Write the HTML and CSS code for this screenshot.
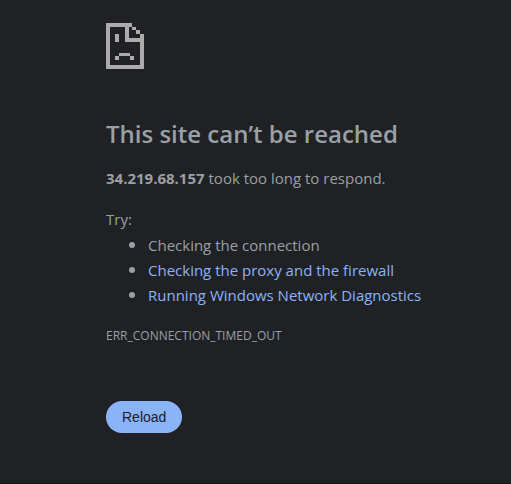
FILE: index.html
```html
<!DOCTYPE html>
<html lang="en">
<head>
<meta charset="utf-8">
<title>34.219.68.157</title>
<link rel="stylesheet" href="styles.css">
</head>
<body>
<main class="error-page">
  <svg class="error-icon" viewBox="0 0 38 46" aria-hidden="true">
    <path d="M0 0h26v4h-3v11h11v-4h4v35H0zM4 4v38h30V19H19V4z" fill-rule="evenodd"/>
    <path d="M26 4h4v3h-4zM30 7h4v4h-4zM9 11h4v8H9zM13 30h11v3H13zM9 33h4v4H9zM24 33h4v4h-4z"/>
  </svg>
  <h1 class="title">This site can’t be reached</h1>
  <p class="summary"><strong>34.219.68.157</strong> took too long to respond.</p>
  <div class="suggestions">
    <p class="suggestions-label">Try:</p>
    <ul class="suggestions-list">
      <li>Checking the connection</li>
      <li><a href="#proxy">Checking the proxy and the firewall</a></li>
      <li><a href="#diagnostics">Running Windows Network Diagnostics</a></li>
    </ul>
  </div>
  <p class="error-code">ERR_CONNECTION_TIMED_OUT</p>
  <button class="reload" type="button">Reload</button>
</main>
</body>
</html>
```
FILE: styles.css
```css
* {
  box-sizing: border-box;
}

body {
  margin: 0;
  min-height: 100vh;
  background: #202124;
  border-bottom: 1px solid #1a1517;
  color: #9aa0a6;
  font-family: "Segoe UI", "Open Sans", "Noto Sans", sans-serif;
  font-size: 15px;
  line-height: 26px;
}

.error-page {
  max-width: 600px;
  padding: 23px 24px 24px 106px;
}

.error-icon {
  display: block;
  width: 38px;
  height: 46px;
  fill: #acacac;
}

.title {
  margin: 50px 0 16px;
  font-size: 24px;
  font-weight: 600;
  line-height: 30px;
}

.summary,
.suggestions-label,
.error-code {
  margin: 0;
}

.suggestions {
  margin-top: 15px;
}

.suggestions-list {
  margin: 0;
  padding-left: 42px;
  line-height: 24px;
}

.suggestions-list li::marker {
  font-size: 18px;
}

a {
  color: #8ab4f8;
  text-decoration: none;
}

.error-code {
  margin-top: 16px;
  font-size: 12px;
}

.reload {
  display: block;
  margin-top: 52px;
  padding: 0 16px;
  height: 32px;
  border: 0;
  border-radius: 16px;
  background: #8ab4f8;
  color: #202124;
  font-family: "Liberation Sans", Arial, sans-serif;
  font-size: 14px;
}
```
